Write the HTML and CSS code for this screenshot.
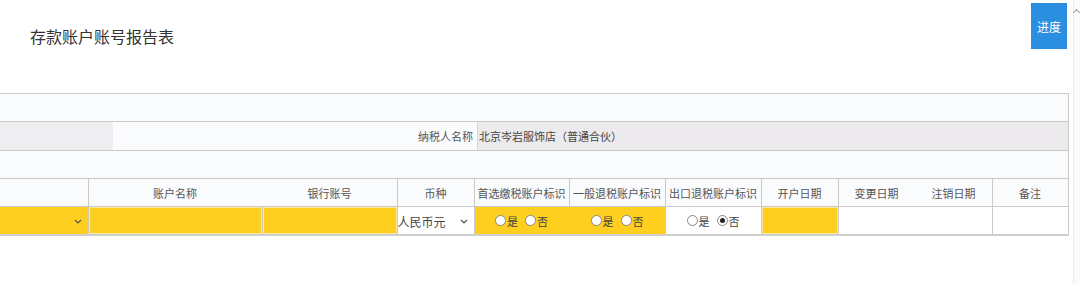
FILE: index.html
```
<!DOCTYPE html>
<html lang="zh-CN">
<head>
    <meta charset="UTF-8">
    <title>存款账户账号报告表</title>
    <link rel="stylesheet" href="styles.css">
</head>
<body>
    <div class="page">
        <div class="top-bar">
            <h1 class="title">存款账户账号报告表</h1>
            <button class="progress-btn">进度</button>
        </div>
        <table class="report">
            <colgroup>
                <col style="width:88px"><col style="width:174px"><col style="width:135px">
                <col style="width:77px"><col style="width:95px"><col style="width:96px">
                <col style="width:96px"><col style="width:77px"><col style="width:77px">
                <col style="width:77px"><col style="width:76px">
            </colgroup>
            <tr class="blank-row"><td colspan="11"></td></tr>
            <tr class="name-row">
                <td colspan="11">
                    <div class="name-line">
                        <div class="name-pad"></div>
                        <div class="name-label">纳税人名称</div>
                        <div class="name-value">北京岑岩服饰店（普通合伙）</div>
                    </div>
                </td>
            </tr>
            <tr class="blank-row"><td colspan="11"></td></tr>
            <tr class="head-row">
                <th></th>
                <th class="no-right">账户名称</th>
                <th>银行账号</th>
                <th>币种</th>
                <th>首选缴税账户标识</th>
                <th>一般退税账户标识</th>
                <th>出口退税账户标识</th>
                <th>开户日期</th>
                <th class="no-right">变更日期</th>
                <th>注销日期</th>
                <th>备注</th>
            </tr>
            <tr class="data-row">
                <td class="yellow">
                    <div class="select-cell"><span></span>
                        <svg class="chev" width="8" height="5" viewBox="0 0 8 5"><path d="M1 1 L4 4 L7 1" fill="none" stroke="#555" stroke-width="1.2"/></svg>
                    </div>
                </td>
                <td class="yellow input"></td>
                <td class="yellow input"></td>
                <td>
                    <div class="select-cell"><span>人民币元</span>
                        <svg class="chev" width="8" height="5" viewBox="0 0 8 5"><path d="M1 1 L4 4 L7 1" fill="none" stroke="#555" stroke-width="1.2"/></svg>
                    </div>
                </td>
                <td class="yellow">
                    <div class="radios"><span class="radio"></span>是 <span class="radio"></span>否</div>
                </td>
                <td class="yellow">
                    <div class="radios"><span class="radio"></span>是 <span class="radio"></span>否</div>
                </td>
                <td>
                    <div class="radios"><span class="radio"></span>是 <span class="radio checked"></span>否</div>
                </td>
                <td class="yellow input"></td>
                <td class="no-right"></td>
                <td></td>
                <td></td>
            </tr>
        </table>
    </div>
    <div class="scroll-strip"><span class="scroll-arrow"></span></div>
</body>
</html>
```
FILE: styles.css
```
body {
    margin: 0;
    background: #ffffff;
    font-family: "Noto Sans CJK SC", "Liberation Sans", sans-serif;
    color: #333;
    overflow: hidden;
}
.page {
    width: 1068px;
}
.top-bar {
    display: flex;
    justify-content: space-between;
    align-items: flex-start;
    height: 93px;
}
.title {
    margin: 24px 0 0 30px;
    font-size: 16px;
    font-weight: normal;
    color: #333;
    line-height: 24px;
}
.progress-btn {
    margin: 3px 1px 0 0;
    width: 36px;
    height: 46px;
    padding: 0;
    border: none;
    background: #2a8fe0;
    color: #fff;
    font-family: "Noto Sans CJK SC", sans-serif;
    font-size: 12px;
}
.report {
    width: 1068px;
    table-layout: fixed;
    border-collapse: collapse;
    font-size: 11px;
    color: #555;
    border-bottom: 2px solid #cfcfcf;
}
.report td, .report th {
    border: 1px solid #c9c9c9;
    padding: 0;
}
.report tr > :first-child {
    border-left: none;
}
.blank-row td {
    height: 27px;
    background: #fafbfd;
}
.name-row td {
    height: 28px;
}
.name-line {
    display: flex;
    height: 28px;
    align-items: stretch;
}
.name-pad {
    width: 113px;
    background: #eeedef;
}
.name-label {
    width: 360px;
    padding-right: 4px;
    background: #fafbfd;
    text-align: right;
    line-height: 28px;
}
.name-value {
    flex: 1;
    background: #eceaec;
    line-height: 28px;
    padding-left: 1px;
    color: #444;
    border-left: 1px solid #d6d6d6;
}
.head-row th {
    height: 27px;
    background: #fafbfd;
    font-weight: normal;
    color: #555;
}
.report .no-right {
    border-right-color: transparent;
}
.data-row td {
    height: 27px;
    background: #fff;
}
.data-row td.yellow {
    background: #fecf1e;
}
.data-row td.input {
    box-shadow: inset 0 0 0 1px #fde89a;
}
.select-cell {
    display: flex;
    justify-content: space-between;
    align-items: center;
    padding: 2px 6px 0 0;
    font-size: 12px;
    color: #444;
}
.radios {
    display: flex;
    justify-content: center;
    align-items: center;
    font-size: 11px;
    color: #444;
}
.radio {
    display: inline-block;
    box-sizing: border-box;
    width: 11px;
    height: 11px;
    border: 1px solid #888;
    border-radius: 50%;
    background: #fff;
    margin: 0 1px 0 7px;
    position: relative;
}
.radio:first-child {
    margin-left: 0;
}
.radio.checked::after {
    content: "";
    position: absolute;
    left: 2px;
    top: 2px;
    width: 5px;
    height: 5px;
    border-radius: 50%;
    background: #222;
}
.scroll-strip {
    position: fixed;
    top: 0;
    right: 0;
    width: 6px;
    height: 284px;
    border-left: 1px solid #ececec;
    background: #fcfcfc;
}
.scroll-arrow {
    position: absolute;
    top: 10px;
    left: 0;
    width: 4px;
    height: 4px;
    border-left: 1px solid #999;
    border-top: 1px solid #999;
    transform: rotate(45deg);
}
```
